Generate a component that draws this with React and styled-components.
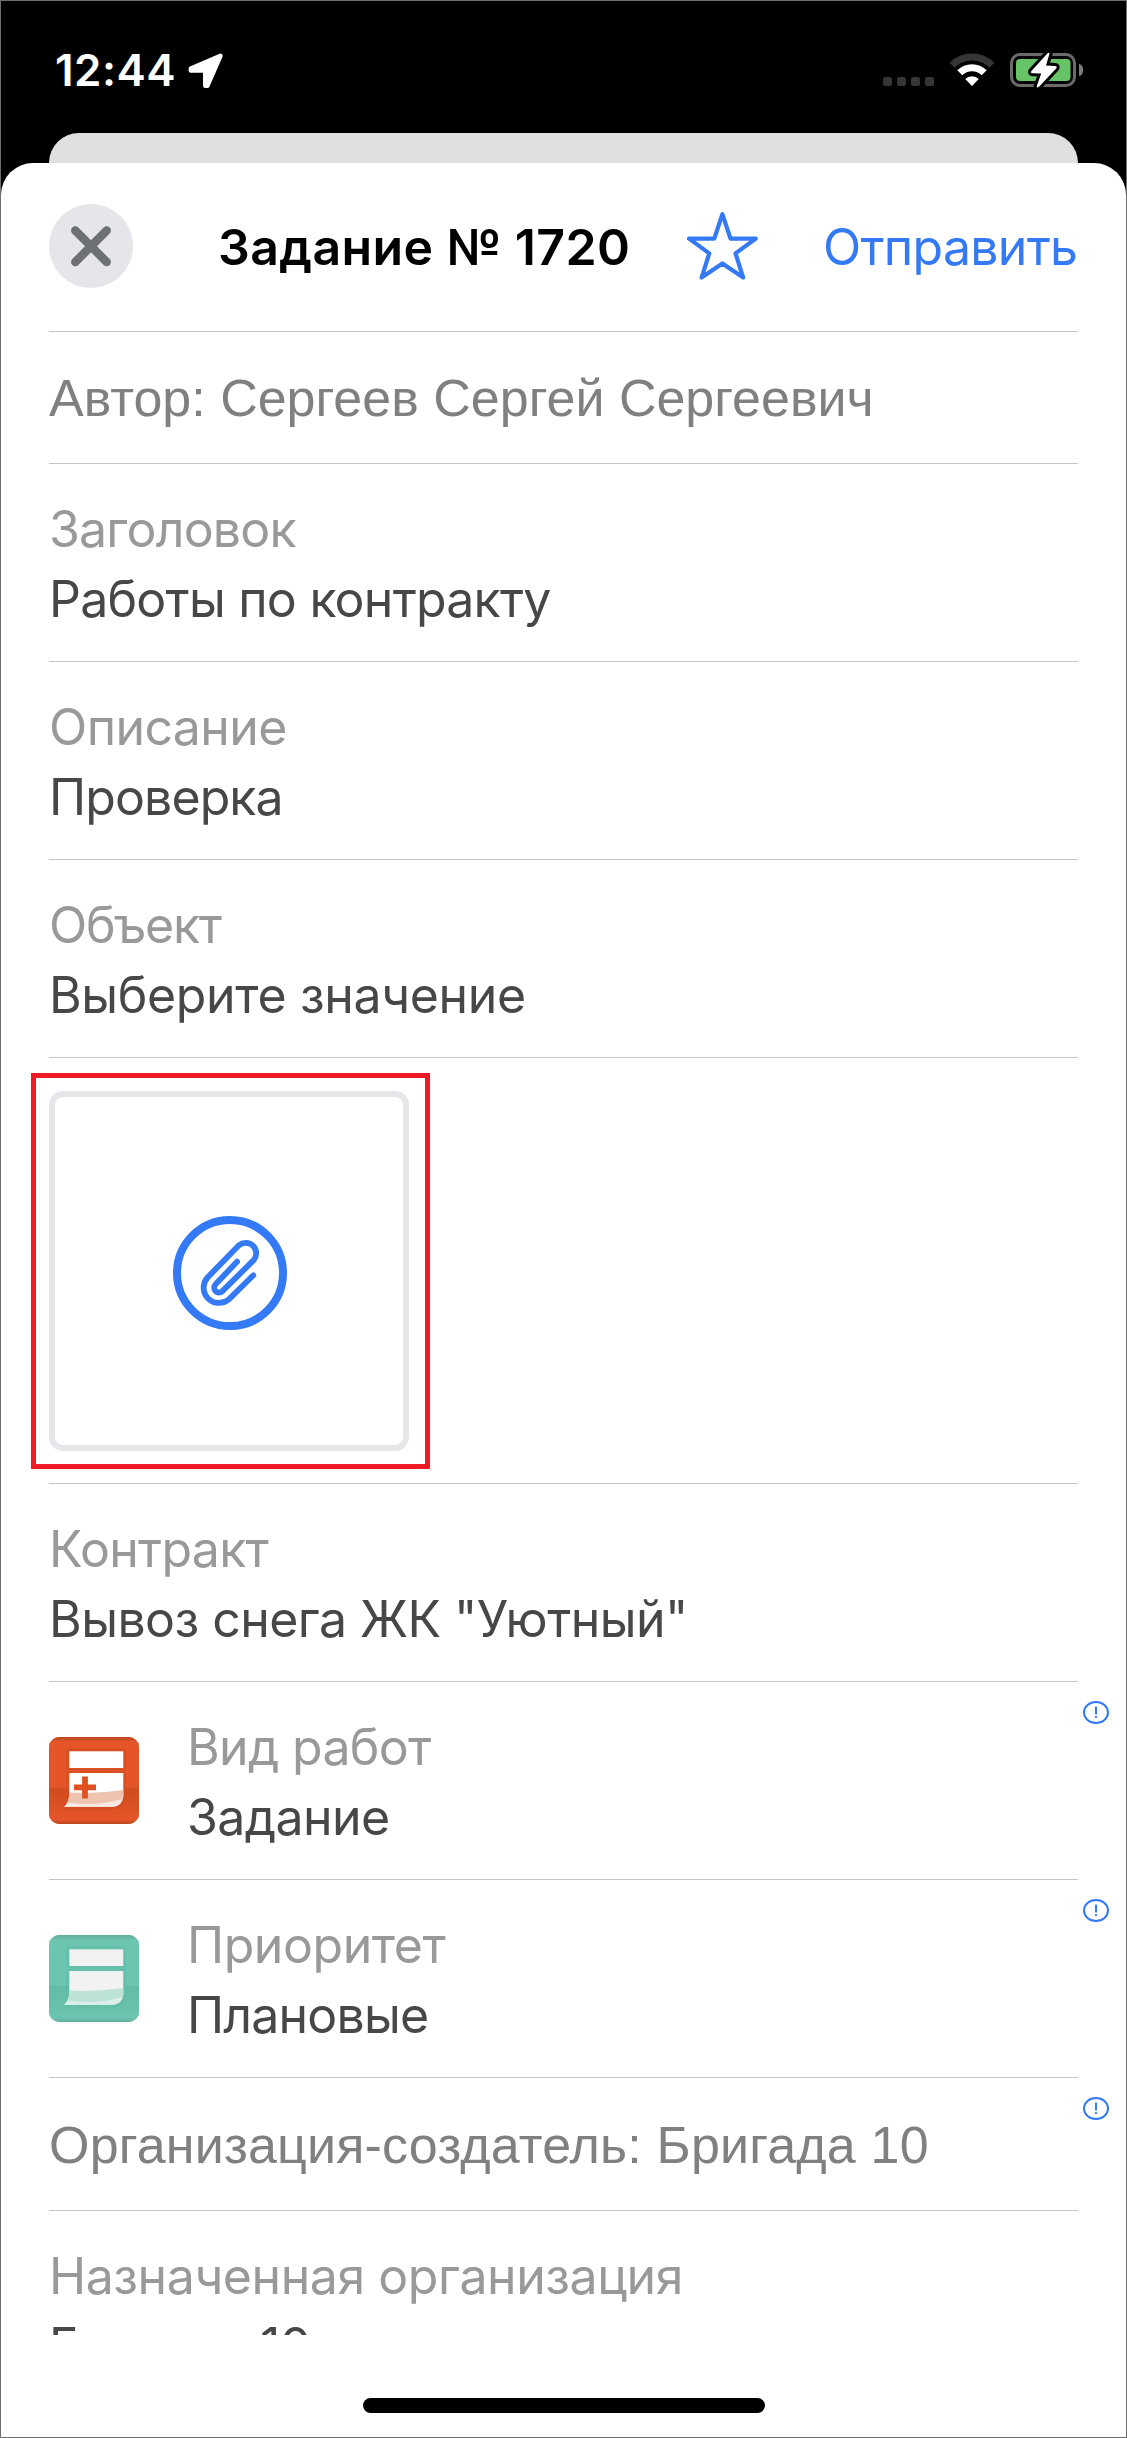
import React from "react";
import styled, { createGlobalStyle } from "styled-components";

const BLUE = "#3479f6";

const GlobalStyle = createGlobalStyle`
  *, *::before, *::after { box-sizing: border-box; }
  body { margin: 0; background: #fff; }
  button { font: inherit; border: 0; padding: 0; background: none; }
  svg { display: block; }
`;

const Screen = styled.main`
  display: flex;
  flex-direction: column;
  width: 1127px;
  height: 2438px;
  border: 1px solid #6d6e71;
  background: #000;
  font-family: "Inter", "Liberation Sans", sans-serif;
  overflow: hidden;
`;

const StatusBar = styled.div`
  display: flex;
  justify-content: space-between;
  height: 132px;
  flex: none;
  padding: 47px 42px 0 54px;
`;

const StatusGroup = styled.div`
  display: flex;
  align-items: flex-start;
  gap: ${(p) => p.$gap}px;
`;

const Clock = styled.time`
  color: #fff;
  font-size: 44px;
  font-weight: 600;
  line-height: 44px;
  letter-spacing: 0.5px;
`;

const StatusIcon = styled.svg`
  margin-top: ${(p) => p.$top}px;
  overflow: visible;
`;

const BackSheet = styled.div`
  flex: none;
  height: 30px;
  margin: 0 48px;
  border-radius: 30px 30px 0 0;
  background: #e0e0e0;
`;

const Sheet = styled.section`
  display: flex;
  flex-direction: column;
  flex: 1;
  border-radius: 32px 32px 0 0;
  background: #fff;
`;

const Header = styled.header`
  display: grid;
  grid-template-columns: 169px 469px 136px 1fr;
  align-items: center;
  flex: none;
  height: 169px;
  margin: 0 48px;
  border-bottom: 1px solid #c6c6c8;
`;

const CloseButton = styled.button`
  width: 84px;
  height: 84px;
  margin-bottom: 2px;
  border-radius: 50%;
  background: #e5e5ea;
`;

const Title = styled.h1`
  margin: 0;
  color: #000;
  font-size: 50px;
  font-weight: 600;
  line-height: 60px;
  letter-spacing: 0.38px;
  white-space: nowrap;
`;

const StarButton = styled.button`
  width: 71px;
  margin-bottom: 3px;
`;

const SendButton = styled.button`
  color: ${BLUE};
  font-size: 50px;
  line-height: 60px;
  letter-spacing: -0.72px;
  text-align: left;
  white-space: nowrap;
`;

const Form = styled.div`
  flex: none;
  height: 2003px;
  padding: 0 48px;
  overflow: hidden;
`;

const Row = styled.div`
  position: relative;
  display: flex;
  align-items: flex-start;
  height: ${(p) => p.$height || 198}px;
  border-bottom: 1px solid #c6c6c8;
`;

const Summary = styled.p`
  margin: 0;
  padding-top: ${(p) => p.$top || 33}px;
  color: #808080;
  font-family: "Liberation Sans", Arial, sans-serif;
  font-size: 52px;
  line-height: 66px;
  letter-spacing: ${(p) => p.$track || 0}px;
  white-space: nowrap;
`;

const Field = styled.div`
  display: flex;
  flex-direction: column;
  padding-top: 30px;
  font-size: 50px;
  line-height: 70px;
  white-space: nowrap;
`;

const Label = styled.span`
  color: #999;
  letter-spacing: ${(p) => p.$track}px;
`;

const Value = styled.span`
  color: #474747;
  letter-spacing: ${(p) => p.$track}px;
`;

const RowIcon = styled.svg`
  flex: none;
  width: 90px;
  height: 87px;
  margin: 55px 48px 0 0;
`;

const AlertBadge = styled.svg`
  position: absolute;
  top: 19px;
  right: -31px;
`;

const Highlight = styled.div`
  margin: 15px 0 0 -18px;
  padding: 13px 16px 13px 13px;
  border: 5px solid #ed1c24;
`;

const AttachTile = styled.button`
  display: flex;
  align-items: center;
  justify-content: center;
  width: 360px;
  height: 360px;
  padding: 3px 0 0 2px;
  border: 6px solid #e5e5ea;
  border-radius: 14px;
  background: #fff;
`;

const HomeArea = styled.footer`
  display: flex;
  justify-content: center;
  flex: 1;
  padding-top: 63px;
`;

const HomeIndicator = styled.div`
  width: 402px;
  height: 15px;
  border-radius: 8px;
  background: #000;
`;

function LocationArrow() {
  return (
    <StatusIcon $top={5} width="36" height="36" viewBox="0 0 36 36">
      <path d="M32.5 2.8 L2.8 15.6 V17.6 H17.2 V32.8 H19.4 Z" fill="#fff" stroke="#fff" strokeWidth="4.4" strokeLinejoin="round" />
    </StatusIcon>
  );
}

function SignalDots() {
  return (
    <StatusIcon $top={29} width="51" height="9" viewBox="0 0 51 9">
      {[0, 14, 28, 42].map((x) => (
        <rect key={x} x={x} width="9" height="9" rx="2.5" fill="#363636" />
      ))}
    </StatusIcon>
  );
}

function WifiIcon() {
  return (
    <StatusIcon $top={5} width="46" height="34" viewBox="0 0 46 34">
      <path d="M3.2 12.2 A28 28 0 0 1 42.8 12.2" fill="none" stroke="#363636" strokeWidth="7" />
      <path d="M10.8 19.8 A17.2 17.2 0 0 1 35.2 19.8" fill="none" stroke="#fff" strokeWidth="7" />
      <path d="M23 33 L16.2 26 A9.6 9.6 0 0 1 29.8 26 Z" fill="#fff" />
    </StatusIcon>
  );
}

function BatteryIcon() {
  return (
    <StatusIcon $top={3} width="74" height="38" viewBox="0 -2 74 38">
      <rect x="1.5" y="1.5" width="63" height="31" rx="8.5" fill="none" stroke="#6b6b6b" strokeWidth="3" />
      <rect x="6" y="6" width="54.5" height="22" rx="4" fill="#66c466" />
      <path d="M69 11 A4.2 6 0 0 1 69 23 Z" fill="#7d7d7d" />
      <path
        d="M37.6 0.2 L21.2 18.2 Q20.4 20.2 22.6 20.2 L31.2 20.6 L26.6 33.4 Q27 35 28.8 34 L46.4 15.2 Q47.4 13.2 45 13 L36 12.6 L39.6 0.6 Q39.4 -1 37.6 0.2 Z"
        fill="#fff"
        stroke="#000"
        strokeWidth="6"
        paintOrder="stroke"
        strokeLinejoin="round"
      />
    </StatusIcon>
  );
}

function CloseIcon() {
  return (
    <svg width="84" height="84" viewBox="0 0 84 84">
      <path d="M26.3 26.5 L57.7 58 M57.7 26.5 L26.3 58" stroke="#6d7175" strokeWidth="8.5" strokeLinecap="round" />
    </svg>
  );
}

function StarIcon() {
  return (
    <svg width="71" height="68" viewBox="0 0 71 68">
      <path
        d="M35.4 2.2 L43.5 26.6 L68.8 26.6 L48.5 41.4 L56.2 65.6 L35.4 51.4 L14.6 65.6 L22.3 41.4 L2 26.6 L27.3 26.6 Z"
        fill="none"
        stroke={BLUE}
        strokeWidth="4.2"
        strokeLinejoin="round"
      />
    </svg>
  );
}

function PaperclipIcon() {
  return (
    <svg width="114" height="114" viewBox="0 0 114 114" fill="none" stroke={BLUE}>
      <circle cx="57" cy="57" r="53" strokeWidth="8" />
      <path
        d="M80.3 59.3 L56.1 83.1 A15.3 15.3 0 0 1 34.5 61.5 L65.9 29.3 A10.5 10.5 0 0 1 80.7 44.1 L49.4 75.1 A4.8 4.8 0 0 1 42.6 68.3 L64 45.7"
        strokeWidth="5.8"
        strokeLinecap="round"
        strokeLinejoin="round"
      />
    </svg>
  );
}

function Alert() {
  return (
    <AlertBadge width="26" height="23" viewBox="0 0 26 23">
      <ellipse cx="13" cy="11.5" rx="12" ry="10.5" fill="none" stroke={BLUE} strokeWidth="2" />
      <rect x="12" y="5.5" width="2" height="8" rx="0.6" fill={BLUE} />
      <rect x="12" y="15" width="2" height="2" rx="0.6" fill={BLUE} />
    </AlertBadge>
  );
}

function NoteIcon({ id, top, bottom, edge, paper, shade, lip, plus }) {
  return (
    <RowIcon viewBox="0 0 90 87">
      <defs>
        <linearGradient id={id} x1="0" y1="0" x2="0" y2="1">
          <stop offset="0" stopColor={edge} />
          <stop offset="0.06" stopColor={top} />
          <stop offset="0.57" stopColor={top} />
          <stop offset="0.6" stopColor={bottom} />
          <stop offset="0.95" stopColor={top} />
          <stop offset="1" stopColor={edge} />
        </linearGradient>
      </defs>
      <path d="M8 0 H82 L90 6 V80 L82 87 H8 L0 80 V6 Z" fill={edge} opacity="0.5" />
      <rect width="90" height="87" rx="10" fill={`url(#${id})`} />
      <rect x="17.5" y="11.5" width="59.5" height="22" rx="2" fill={bottom} opacity="0.6" />
      <path d="M17.5 34 H77 V62 Q75 73 64 73 H12 Q17 67 17.5 58 Z" fill={bottom} opacity="0.6" />
      <rect x="20.3" y="14.3" width="54" height="16.7" fill={paper} />
      <path d="M20.3 36 H74.3 V60 Q73 69.7 63 69.7 H15.3 Q20.3 65 20.3 57 Z" fill={paper} />
      <path d="M20.3 55.5 Q48 57 74.3 53 V60 Q73 69.7 63 69.7 H15.3 Q20.3 65 20.3 55.5 Z" fill={shade} />
      <path d="M15.3 69.7 L19.5 65.5 Q48 70 73 62 Q71.5 69.7 63 69.7 Z" fill={lip} />
      {plus && <path d="M25 50.3 H47 M36 39.5 V61.5" stroke="#e1511f" strokeWidth="5.8" />}
    </RowIcon>
  );
}

const workColors = { top: "#e65529", bottom: "#d04c20", edge: "#b9481d", paper: "#fff", shade: "#eec3b0", lip: "#faeae3" };
const priorityColors = { top: "#6cc5b1", bottom: "#61bba5", edge: "#63ad9c", paper: "#f2f2f2", shade: "#bde2d8", lip: "#dceee9" };

function TextField({ label, value, labelTrack = -0.6, valueTrack = -0.6 }) {
  return (
    <Field>
      <Label $track={labelTrack}>{label}</Label>
      <Value $track={valueTrack}>{value}</Value>
    </Field>
  );
}

export default function App() {
  return (
    <>
      <GlobalStyle />
      <Screen>
        <StatusBar>
          <StatusGroup $gap={12}>
            <Clock>12:44</Clock>
            <LocationArrow />
          </StatusGroup>
          <StatusGroup $gap={15}>
            <SignalDots />
            <WifiIcon />
            <BatteryIcon />
          </StatusGroup>
        </StatusBar>
        <BackSheet />
        <Sheet>
          <Header>
            <CloseButton aria-label="Закрыть">
              <CloseIcon />
            </CloseButton>
            <Title>Задание № 1720</Title>
            <StarButton aria-label="В избранное">
              <StarIcon />
            </StarButton>
            <SendButton>Отправить</SendButton>
          </Header>
          <Form>
            <Row $height={132}>
              <Summary>Автор: Сергеев Сергей Сергеевич</Summary>
            </Row>
            <Row>
              <TextField label="Заголовок" value="Работы по контракту" labelTrack={-0.8} valueTrack={-0.76} />
            </Row>
            <Row>
              <TextField label="Описание" value="Проверка" valueTrack={-0.9} />
            </Row>
            <Row>
              <TextField label="Объект" value="Выберите значение" labelTrack={-1.3} valueTrack={-0.36} />
            </Row>
            <Row $height={426}>
              <Highlight>
                <AttachTile aria-label="Прикрепить файл">
                  <PaperclipIcon />
                </AttachTile>
              </Highlight>
            </Row>
            <Row>
              <TextField label="Контракт" value={'Вывоз снега ЖК "Уютный"'} labelTrack={-0.7} valueTrack={-0.56} />
            </Row>
            <Row>
              <NoteIcon id="work" {...workColors} plus />
              <TextField label="Вид работ" value="Задание" labelTrack={-0.69} />
              <Alert />
            </Row>
            <Row>
              <NoteIcon id="priority" {...priorityColors} />
              <TextField label="Приоритет" value="Плановые" labelTrack={-0.45} valueTrack={-0.8} />
              <Alert />
            </Row>
            <Row $height={133}>
              <Summary $top={34} $track={0.18}>Организация-создатель: Бригада 10</Summary>
              <Alert />
            </Row>
            <Row>
              <TextField label="Назначенная организация" value="Бригада 10" labelTrack={-0.44} />
            </Row>
          </Form>
          <HomeArea>
            <HomeIndicator />
          </HomeArea>
        </Sheet>
      </Screen>
    </>
  );
}
